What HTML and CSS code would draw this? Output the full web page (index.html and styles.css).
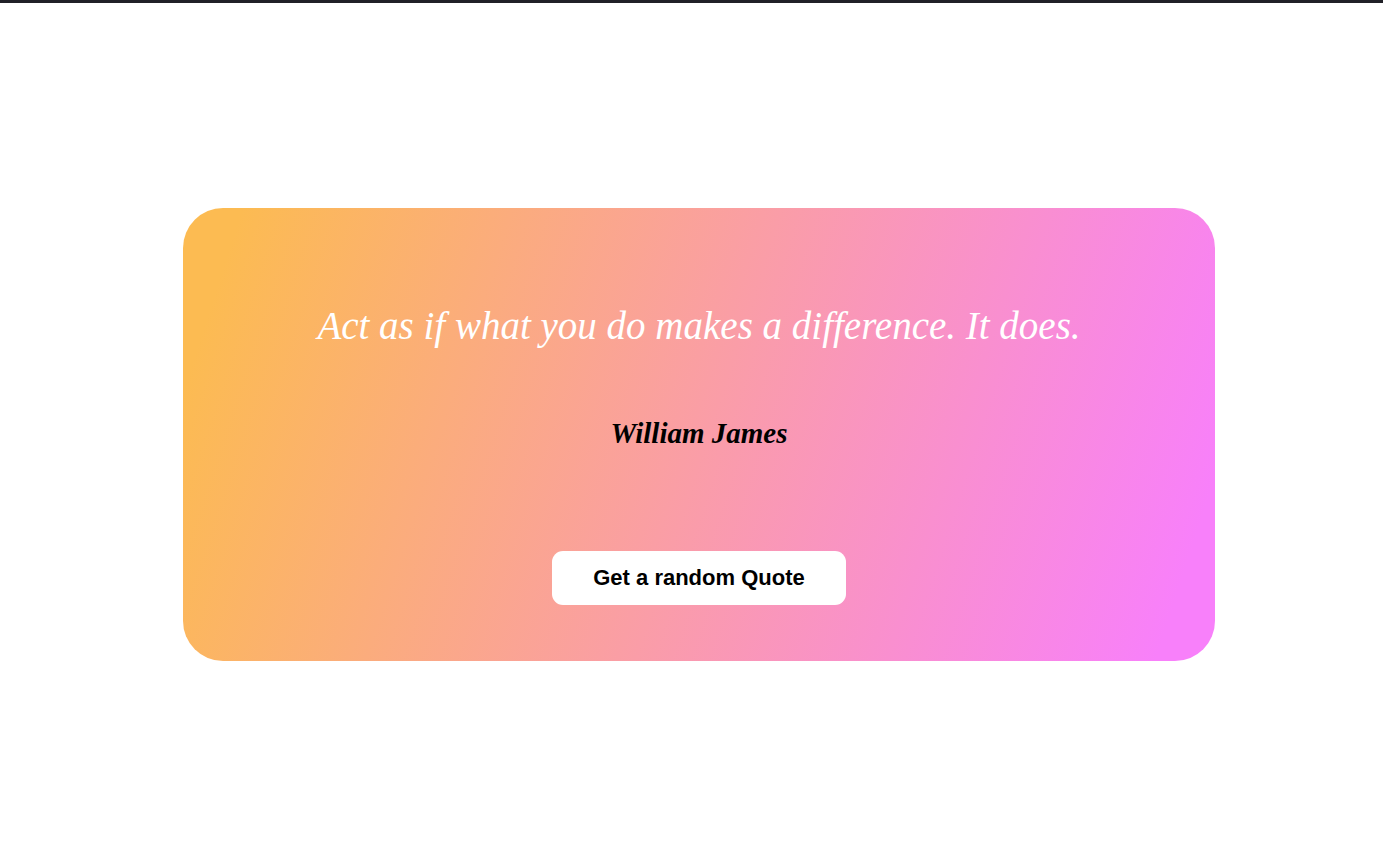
FILE: index.html
```html
<!DOCTYPE html>
<html lang="en">
<head>
<meta charset="utf-8">
<title>Random Quote</title>
<link rel="stylesheet" href="styles.css">
</head>
<body>
<div class="topbar"></div>
<main class="page">
  <section class="card">
    <p class="quote">Act as if what you do makes a difference. It does.</p>
    <p class="author">William James</p>
    <button class="btn" type="button">Get a random Quote</button>
  </section>
</main>
</body>
</html>
```

FILE: styles.css
```css
html, body {
  margin: 0;
  padding: 0;
  background: #ffffff;
}
.topbar {
  height: 3px;
  background: #202027;
}
.page {
  display: flex;
  justify-content: center;
  padding: 205px 0 0 15px;
}
.card {
  width: 1032px;
  height: 453px;
  box-sizing: border-box;
  border-radius: 40px;
  background: linear-gradient(108deg, rgb(252, 187, 82) 5%, rgb(248, 128, 250) 95%);
  display: flex;
  flex-direction: column;
  align-items: center;
  padding-top: 94px;
}
.quote {
  margin: 0;
  font-family: "Liberation Serif", "DejaVu Serif", serif;
  font-style: italic;
  font-size: 39px;
  line-height: 48px;
  color: #ffffff;
}
.author {
  margin: 65px 0 0;
  font-family: "Liberation Serif", "DejaVu Serif", serif;
  font-style: italic;
  font-weight: bold;
  font-size: 29px;
  line-height: 36px;
  color: #000000;
}
.btn {
  margin-top: 100px;
  width: 294px;
  height: 54px;
  border: none;
  border-radius: 11px;
  background: #ffffff;
  font-family: "Liberation Sans", Arial, sans-serif;
  font-weight: bold;
  font-size: 22px;
  color: #000000;
  cursor: pointer;
}
```
